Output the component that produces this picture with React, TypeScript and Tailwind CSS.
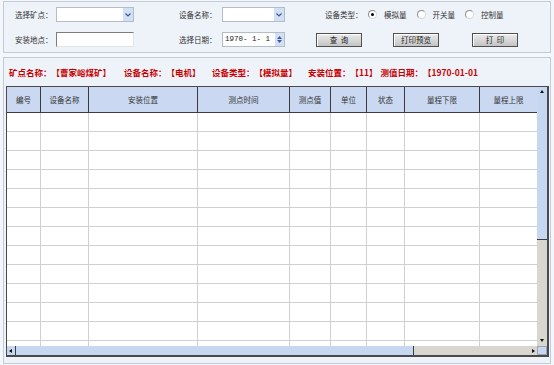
import React from "react";

const cols = [
  { label: "编号", w: "w-[34px]" },
  { label: "设备名称", w: "w-[48px]" },
  { label: "安装位置", w: "w-[109px]" },
  { label: "测点时间", w: "w-[92px]" },
  { label: "测点值", w: "w-[41px]" },
  { label: "单位", w: "w-[36px]" },
  { label: "状态", w: "w-[38px]" },
  { label: "量程下限", w: "w-[75px]" },
  { label: "量程上限", w: "w-[57px]" },
];

const rows = Array.from({ length: 13 }, (_, i) => i);

function Select({ w }: { w: string }) {
  return (
    <div className={`${w} h-[15px] flex bg-white border border-[#b4bcc8]`}>
      <div className="flex-1" />
      <div className="w-[10px] h-full bg-[#d2e0f5] flex items-center justify-center">
        <svg width="6" height="4" viewBox="0 0 6 4">
          <path d="M0.5 0.5 L3 3 L5.5 0.5" stroke="#3b5a94" strokeWidth="1.2" fill="none" />
        </svg>
      </div>
    </div>
  );
}

function Radio({ on }: { on?: boolean }) {
  return (
    <div className="w-[9px] h-[9px] rounded-full bg-white border border-[#8c8c8c] border-r-[#d8d8d8] border-b-[#d8d8d8] flex items-center justify-center">
      {on && <div className="w-[3px] h-[3px] rounded-full bg-black" />}
    </div>
  );
}

function Btn({ text, ml }: { text: string; ml: string }) {
  return (
    <div
      className={`${ml} w-[46px] h-[14px] border border-[#505050] bg-gradient-to-b from-[#ececec] to-[#c4c4c4] shadow-[inset_1px_1px_0_#ffffff] flex items-center justify-center text-[#222] whitespace-pre`}
    >
      {text}
    </div>
  );
}

function Arrow({ dir }: { dir: "up" | "down" | "left" | "right" }) {
  const d = {
    up: "M0 3 L2 0 L4 3 Z",
    down: "M0 0 L4 0 L2 3 Z",
    left: "M3 0 L3 4 L0 2 Z",
    right: "M0 0 L0 4 L3 2 Z",
  }[dir];
  return (
    <svg width="4" height="4" viewBox="0 0 4 4">
      <path d={d} fill="#111" />
    </svg>
  );
}

export default function App() {
  return (
    <div className="w-[554px] h-[365px] bg-[#f3f6fb] px-[3px] pt-[1px] font-['Noto_Sans_CJK_SC',sans-serif] text-[7.5px] text-[#333] leading-none [text-spacing-trim:space-all]">
      {/* filter panel */}
      <div className="h-[52px] border border-[#c3cbd7] bg-[#eef2f9] flex flex-col">
        <div className="h-[25px] flex items-center pl-[11px]">
          <span className="w-[41px]">选择矿点：</span>
          <Select w="w-[78px]" />
          <span className="ml-[45px] w-[43px]">设备名称：</span>
          <Select w="w-[63px]" />
          <span className="ml-[40px] w-[43px]">设备类型：</span>
          <Radio on />
          <span className="ml-[7px]">模拟量</span>
          <div className="ml-[10px]"><Radio /></div>
          <span className="ml-[7px]">开关量</span>
          <div className="ml-[10px]"><Radio /></div>
          <span className="ml-[7px]">控制量</span>
        </div>
        <div className="h-[25px] flex items-center pl-[11px]">
          <span className="w-[41px]">安装地点：</span>
          <div className="w-[78px] h-[15px] bg-white border border-[#7c7c7c] border-r-[#e4e4e4] border-b-[#e4e4e4]" />
          <span className="ml-[45px] w-[43px]">选择日期：</span>
          <div className="w-[63px] h-[15px] bg-white border border-[#b4bcc8] flex items-center">
            <span className="flex-1 pl-[2px] font-['Liberation_Mono',monospace] text-[7.5px] text-[#222] whitespace-pre">1970- 1- 1</span>
            <div className="w-[9px] h-full bg-[#d2e0f5] flex flex-col items-center justify-center gap-[1px]">
              <svg width="5" height="3" viewBox="0 0 5 3"><path d="M0 3 L2.5 0 L5 3 Z" fill="#3b5a94" /></svg>
              <svg width="5" height="3" viewBox="0 0 5 3"><path d="M0 0 L5 0 L2.5 3 Z" fill="#3b5a94" /></svg>
            </div>
          </div>
          <Btn text="查  询" ml="ml-[31px]" />
          <Btn text="打印预览" ml="ml-[31px]" />
          <Btn text="打  印" ml="ml-[33px]" />
        </div>
      </div>

      {/* data panel */}
      <div className="mt-[4px] h-[307px] border border-[#c3cbd7] bg-[#eef2f9] flex flex-col">
        <div className="h-[28px] flex items-center pl-[5px] text-[8.5px] font-bold text-[#c80000] whitespace-pre">
          <span className="w-[115px] shrink-0">矿点名称：【曹家峪煤矿】</span>
          <span className="w-[88px] shrink-0">设备名称：【电机】</span>
          <span className="w-[96px] shrink-0">设备类型：【模拟量】</span>
          <span className="shrink-0">安装位置：【11】</span>
          <span className="ml-[3px]">测值日期：【1970-01-01</span>
        </div>

        <div className="ml-[2px] w-[543px] h-[271px] border-l border-t border-r-2 border-b-2 border-[#4a4a4a] flex flex-col bg-white">
          <div className="flex h-[259px]">
            <div className="w-[530px] overflow-hidden">
              <div className="flex h-[26px] bg-[#cad9f1] border-b border-[#3c3c3c]">
                {cols.map((c, i) => (
                  <div
                    key={c.label}
                    className={`${c.w} shrink-0 flex items-center justify-center ${i < cols.length - 1 ? "border-r border-[#3c3c3c]" : ""} text-[#333]`}
                  >
                    {c.label}
                  </div>
                ))}
              </div>
              {rows.map((r) => (
                <div key={r} className="flex h-[19px] border-b border-[#d0d0d0]">
                  {cols.map((c, i) => (
                    <div
                      key={c.label}
                      className={`${c.w} shrink-0 ${i < cols.length - 1 ? "border-r border-[#d0d0d0]" : ""}`}
                    />
                  ))}
                </div>
              ))}
            </div>
            {/* vertical scrollbar */}
            <div className="w-[10px] flex flex-col bg-[#d9d6cf]">
              <div className="h-[10px] bg-[#c6d7f1] flex items-center justify-center">
                <Arrow dir="up" />
              </div>
              <div className="h-[143px] bg-[#c6d7f1] border-b border-[#3c3c3c]" />
              <div className="flex-1" />
              <div className="h-[10px] flex items-center justify-center">
                <Arrow dir="down" />
              </div>
            </div>
          </div>
          {/* horizontal scrollbar */}
          <div className="flex h-[9px] bg-[#d9d6cf]">
            <div className="w-[8px] bg-[#c6d7f1] flex items-center justify-center">
              <Arrow dir="left" />
            </div>
            <div className="w-[399px] bg-[#c6d7f1] border-l border-r border-[#3c3c3c]" />
            <div className="flex-1" />
            <div className="w-[6px] flex items-center justify-center">
              <Arrow dir="right" />
            </div>
            <div className="w-[10px] bg-[#c6d7f1] border border-[#9aa5b5]" />
          </div>
        </div>
      </div>
    </div>
  );
}
